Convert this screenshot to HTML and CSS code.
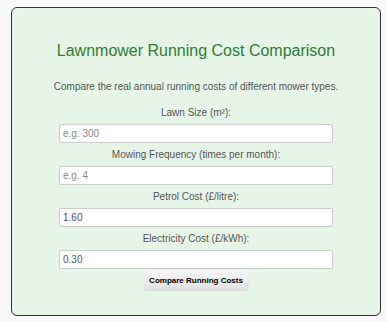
FILE: index.html
```html
<!DOCTYPE html>
<html lang="en">
<head>
    <meta charset="UTF-8">
    <meta name="viewport" content="width=device-width, initial-scale=1.0">
    <title>Lawnmower Running Cost Comparison</title>
    <link rel="stylesheet" href="styles.css">
</head>
<body>
    <div class="container">
        <h1>Lawnmower Running Cost Comparison</h1>
        <p class="intro">Compare the real annual running costs of different mower types.</p>
        <div class="form">
            <label for="lawn">Lawn Size (m²):</label>
            <input type="number" id="lawn" placeholder="e.g. 300">
            <label for="freq">Mowing Frequency (times per month):</label>
            <input type="number" id="freq" placeholder="e.g. 4">
            <label for="petrol">Petrol Cost (£/litre):</label>
            <input type="text" id="petrol" value="1.60">
            <label for="elec">Electricity Cost (£/kWh):</label>
            <input type="text" id="elec" value="0.30">
            <button id="compare">Compare Running Costs</button>
        </div>
    </div>
</body>
</html>
```
FILE: styles.css
```css
body {
    margin: 0;
    padding: 7px 6px 0 11px;
    background-color: #f9f9f9;
    font-family: "Liberation Sans", Arial, sans-serif;
}
.container {
    width: 368px;
    background-color: #e6f5e7;
    border: 1px solid #333;
    border-radius: 6px;
    text-align: center;
    padding: 32px 0 25px;
}
h1 {
    margin: 0;
    font-size: 16px;
    font-weight: normal;
    line-height: 21px;
    color: #2e7d32;
}
.intro {
    margin: 19px 0 12px;
    font-size: 10px;
    line-height: 14px;
    color: #555;
}
.form {
    display: flex;
    flex-direction: column;
    align-items: center;
}
label {
    font-size: 10px;
    line-height: 14px;
    color: #555;
    margin-bottom: 4px;
}
input {
    box-sizing: border-box;
    width: 274px;
    height: 19px;
    margin: 0 0 5px;
    padding: 0 3px;
    border: 1px solid #ccc;
    border-radius: 2px;
    background: #fff;
    font-family: "Liberation Sans", Arial, sans-serif;
    font-size: 10px;
    color: #555;
}
input::placeholder {
    color: #888;
}
button {
    margin-top: -4px;
    width: 105px;
    height: 20px;
    padding: 0;
    white-space: nowrap;
    border: none;
    border-radius: 3px;
    background: linear-gradient(#f8f8f8, #e0e0e0);
    box-shadow: 0 1px 1px rgba(0, 0, 0, 0.08);
    font-family: "Liberation Sans", Arial, sans-serif;
    font-size: 8px;
    font-weight: bold;
    color: #000;
}
```
